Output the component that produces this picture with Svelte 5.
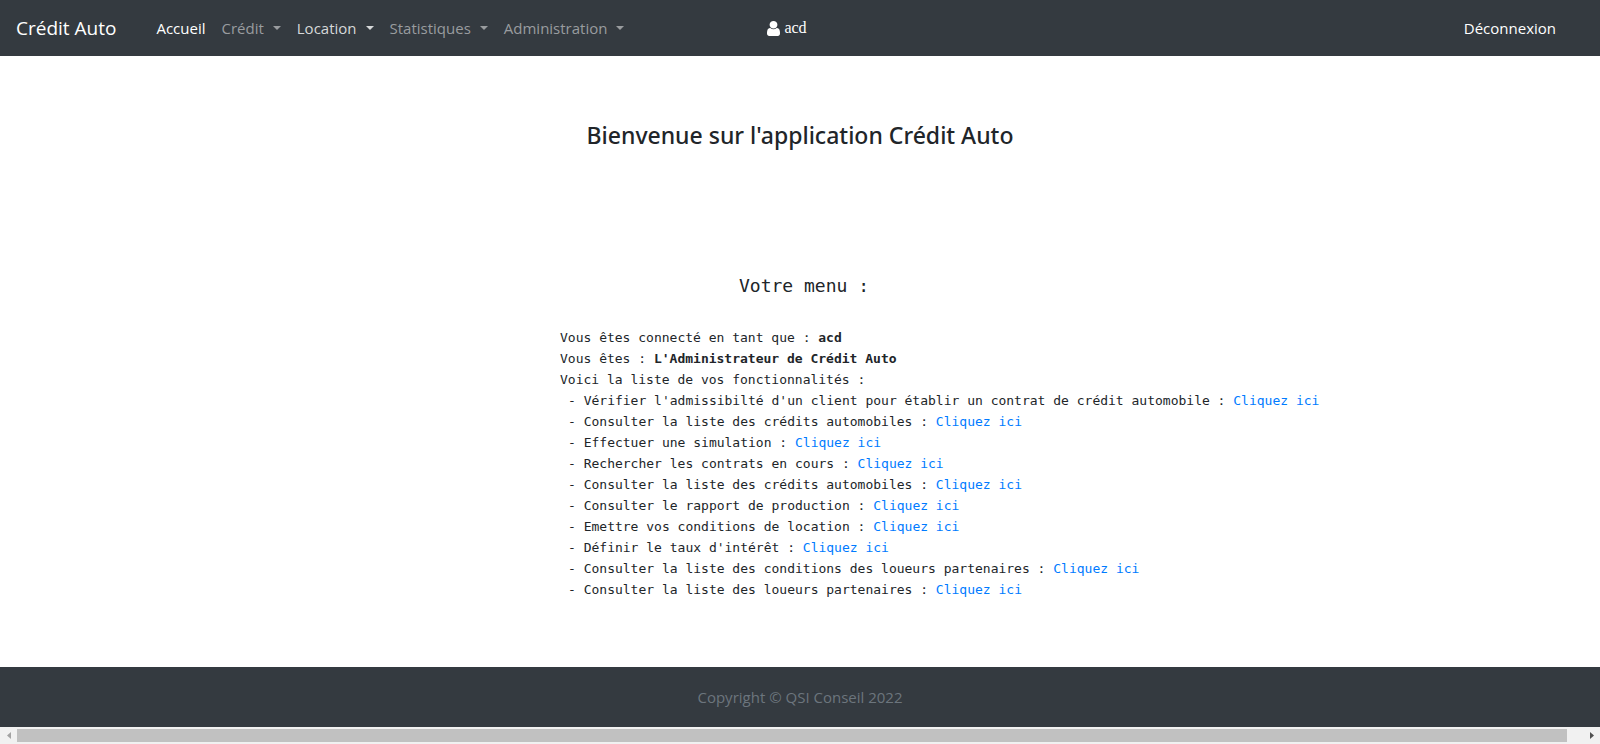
<script>
  const menus = [
    { label: 'Accueil', state: 'active', dropdown: false },
    { label: 'Crédit', state: 'muted', dropdown: true },
    { label: 'Location', state: 'hovered', dropdown: true },
    { label: 'Statistiques', state: 'muted', dropdown: true },
    { label: 'Administration', state: 'muted', dropdown: true }
  ];

  const features = [
    "Vérifier l'admissibilté d'un client pour établir un contrat de crédit automobile",
    'Consulter la liste des crédits automobiles',
    'Effectuer une simulation',
    'Rechercher les contrats en cours',
    'Consulter la liste des crédits automobiles',
    'Consulter le rapport de production',
    'Emettre vos conditions de location',
    "Définir le taux d'intérêt",
    'Consulter la liste des conditions des loueurs partenaires',
    'Consulter la liste des loueurs partenaires'
  ];
</script>

<div class="page">
  <header class="navbar">
    <div class="side">
      <a class="brand" href="#accueil">Crédit Auto</a>
      <nav>
        {#each menus as menu}
          {#if menu.dropdown}
            <button type="button" class="item {menu.state}">{menu.label}<span class="caret"></span></button>
          {:else}
            <a class="item {menu.state}" href="#accueil">{menu.label}</a>
          {/if}
        {/each}
      </nav>
    </div>
    <div class="user">
      <svg viewBox="256 128 1280 1536" preserveAspectRatio="none" aria-hidden="true">
        <path d="M1536 1399q0 109-62.5 187t-150.5 78h-854q-88 0-150.5-78t-62.5-187q0-85 8.5-160.5t31.5-152 58.5-131 94-89 134.5-34.5q131 128 313 128t313-128q76 0 134.5 34.5t94 89 58.5 131 31.5 152 8.5 160.5zm-256-887q0 159-112.5 271.5t-271.5 112.5-271.5-112.5-112.5-271.5 112.5-271.5 271.5-112.5 271.5 112.5 112.5 271.5z" />
      </svg>
      <span>acd</span>
    </div>
    <div class="side end">
      <a class="item active" href="#deconnexion">Déconnexion</a>
    </div>
  </header>

  <main>
    <h1>Bienvenue sur l'application Crédit Auto</h1>
    <section>
      <h2>Votre menu :</h2>
      <div class="details">
        <p>Vous êtes connecté en tant que : <strong>acd</strong></p>
        <p>Vous êtes : <strong>L'Administrateur de Crédit Auto</strong></p>
        <p>Voici la liste de vos fonctionnalités :</p>
        <ul>
          {#each features as feature}
            <li>- {feature} : <a href="#fonction">Cliquez ici</a></li>
          {/each}
        </ul>
      </div>
    </section>
  </main>

  <footer>Copyright © QSI Conseil 2022</footer>

  <div class="scrollbar">
    <button type="button" class="arrow" aria-label="Défiler à gauche" disabled>
      <svg viewBox="0 0 4 7" aria-hidden="true"><path d="M4 0v7L0 3.5z" /></svg>
    </button>
    <div class="track"><div class="thumb"></div></div>
    <button type="button" class="arrow" aria-label="Défiler à droite">
      <svg viewBox="0 0 4 7" aria-hidden="true"><path d="M0 0v7l4-3.5z" /></svg>
    </button>
  </div>
</div>

<style>
  :global(body) {
    margin: 0;
    background: #fff;
  }
  .page {
    display: flex;
    flex-direction: column;
    min-height: 100vh;
    color: #212529;
    font: 15px/24px "Segoe UI", "Open Sans", sans-serif;
  }
  a {
    text-decoration: none;
  }
  button {
    margin: 0;
    border: 0;
    background: none;
    font: inherit;
  }
  .navbar {
    display: grid;
    grid-template-columns: 1fr auto 1fr;
    align-items: center;
    box-sizing: border-box;
    min-height: 56px;
    padding: 8px 36px 8px 16px;
    background: #343a40;
    color: #fff;
  }
  .side,
  nav {
    display: flex;
    align-items: center;
  }
  .side {
    gap: 32px;
  }
  .end {
    justify-content: flex-end;
  }
  .brand {
    color: #fff;
    font-size: 19px;
    line-height: 30px;
  }
  .item {
    padding: 8px;
    white-space: nowrap;
  }
  .active {
    color: #fff;
  }
  .muted {
    color: #999c9f;
  }
  .hovered {
    color: #d6d8d9;
  }
  .caret {
    display: inline-block;
    margin-left: 9px;
    border: 4px solid transparent;
    border-top-color: currentColor;
    border-bottom: 0;
    vertical-align: 4px;
  }
  .user {
    display: flex;
    align-items: center;
    gap: 4px;
    padding-right: 6px;
    font: 16px/24px "Liberation Serif", serif;
  }
  .user svg {
    width: 13px;
    height: 15px;
    fill: #fff;
  }
  main {
    flex: 1;
    padding-bottom: 64px;
  }
  h1,
  h2 {
    margin: 0;
    text-align: center;
  }
  h1 {
    padding-top: 64px;
    font-family: "Segoe UI", "Noto Sans", sans-serif;
    font-size: 23px;
    font-weight: 500;
    line-height: 30px;
  }
  section {
    padding-top: 122px;
    font-family: Consolas, "DejaVu Sans Mono", monospace;
  }
  h2 {
    padding-left: 8px;
    font-size: 18px;
    font-weight: 400;
    line-height: 28px;
  }
  .details {
    margin-left: 35%;
    padding-top: 27px;
    font-size: 13px;
    line-height: 21px;
  }
  p,
  ul {
    margin: 0;
    padding: 0;
  }
  ul {
    padding-left: 8px;
    list-style: none;
  }
  li a {
    color: #007bff;
  }
  footer {
    padding: 18px;
    background: #343a40;
    color: #6c757d;
    text-align: center;
  }
  .scrollbar {
    display: flex;
    height: 17px;
    background: #f1f1f1;
  }
  .arrow {
    display: flex;
    align-items: center;
    justify-content: center;
    width: 17px;
    padding: 0;
  }
  .arrow svg {
    width: 4px;
    height: 7px;
    fill: #505050;
  }
  .arrow:disabled svg {
    fill: #a3a3a3;
  }
  .track {
    flex: 1;
    padding: 2px 0;
  }
  .thumb {
    width: 99%;
    height: 13px;
    background: #c1c1c1;
  }
</style>
